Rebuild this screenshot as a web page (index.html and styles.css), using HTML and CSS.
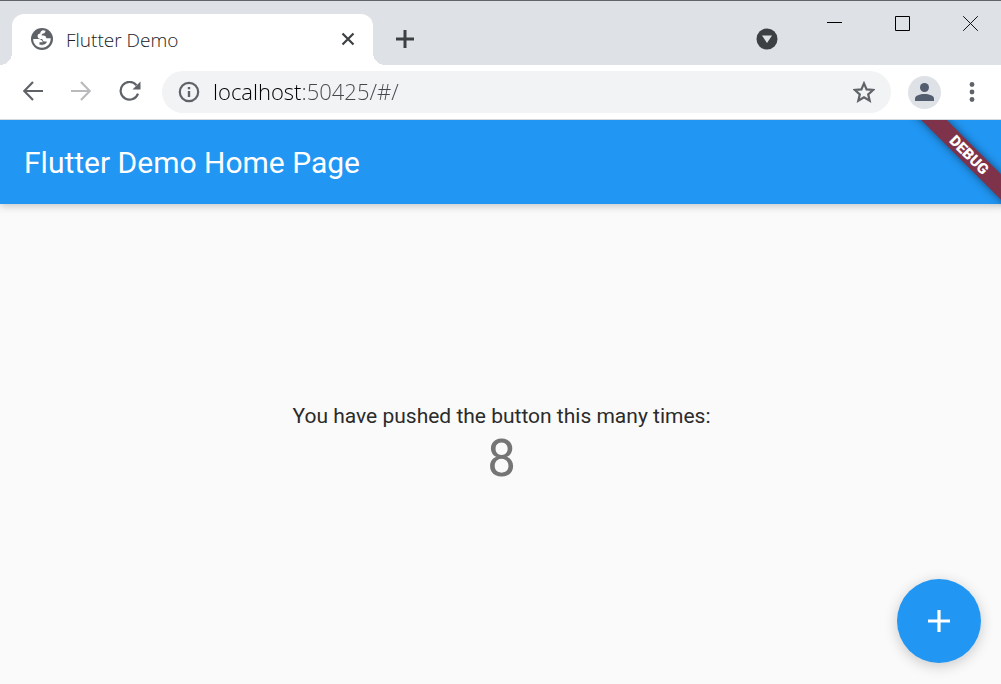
FILE: index.html
```html
<!DOCTYPE html>
<html lang="en">
<head>
<meta charset="utf-8">
<title>Flutter Demo</title>
<link rel="stylesheet" href="styles.css">
</head>
<body>
<header class="chrome">
  <div class="tabstrip">
    <div class="tab">
      <svg class="favicon" viewBox="0 0 22 22" aria-hidden="true"><circle cx="11" cy="11" r="11" fill="#5f6368"/><path d="M2.200 11h5.300c2.200 0 3.900 1.300 4.300 3.200h-3.300v2.600h2.400v2.900c-5 0-8.900-3.900-8.700-8.700zM10.900 19.700l.3-2.900c2.800-.1 4.600-1.400 4.600-3.300h-1.800c-1.800 0-2.500-1.300-2.700-2.600H9c-1.500-.1-2.400-1.100-2.400-2.600 0-1.700 1-2.500 2.700-2.700 0-1.700.8-2.900 2.500-3.300l2.700.5c-.1 1.600-1 2.500-2.300 2.800-1 .3-1.700 1-1.500 1.900h1.800c1.700 0 2.600 1 2.800 2.700h4.400c.2 5-3.600 9.500-8.800 9.500z" fill="#fff"/></svg>
      <span class="tab-title">Flutter Demo</span>
      <button class="plain" aria-label="Close tab"><svg width="14" height="14" viewBox="0 0 14 14"><path d="M1.500 1.500l11 11M12.500 1.500l-11 11" stroke="#3c4043" stroke-width="2.200"/></svg></button>
    </div>
    <button class="plain new-tab" aria-label="New tab"><svg width="18" height="18" viewBox="0 0 18 18"><path d="M9 0v18M0 9h18" stroke="#3c4043" stroke-width="3"/></svg></button>
    <button class="plain tab-search" aria-label="Search tabs"><svg width="22" height="22" viewBox="0 0 22 22"><circle cx="11" cy="11" r="10.500" fill="#3c4043"/><path d="M6 7.500h10l-5 7.500z" fill="#dee1e6"/></svg></button>
    <div class="window-buttons">
      <button class="plain" aria-label="Minimize"><svg width="15" height="15" viewBox="0 0 15 15"><path d="M0 6.500h15" stroke="#000"/></svg></button>
      <button class="plain" aria-label="Maximize"><svg width="15" height="15" viewBox="0 0 15 15"><path d="M.5.5h14v14H.5z" fill="none" stroke="#000"/></svg></button>
      <button class="plain" aria-label="Close"><svg width="15" height="15" viewBox="0 0 15 15"><path d="M.2.2l14.600 14.600M14.800.2L.2 14.800" stroke="#111"/></svg></button>
    </div>
  </div>
  <div class="toolbar">
    <div class="nav">
      <button class="plain" aria-label="Back"><svg width="20" height="20" viewBox="0 0 20 20"><path d="M20 10H1.500M10 1L1.200 10l8.800 9" fill="none" stroke="#5f6368" stroke-width="2.200"/></svg></button>
      <button class="plain" aria-label="Forward" disabled><svg width="20" height="20" viewBox="0 0 20 20"><path d="M0 10h18.500M10 1l8.800 9-8.800 9" fill="none" stroke="#bababc" stroke-width="2.200"/></svg></button>
      <button class="plain" aria-label="Reload"><svg width="22" height="20" viewBox="0 0 22 20"><path d="M19 12.600A8.900 8.900 0 1 1 17.500 4.200" fill="none" stroke="#5f6368" stroke-width="2.200"/><path d="M21.500 .5v8h-8z" fill="#5f6368"/></svg></button>
    </div>
    <div class="address">
      <svg width="22" height="22" viewBox="0 0 22 22" aria-hidden="true"><circle cx="11" cy="11" r="9.200" fill="none" stroke="#5f6368" stroke-width="2.200"/><path d="M9.800 10h2.400v6H9.800zM9.800 6h2.400v2.200H9.800z" fill="#5f6368"/></svg>
      <input class="url" type="text" aria-label="Address" value="localhost:50425/#/">
      <button class="plain" aria-label="Bookmark"><svg width="22" height="22" viewBox="0 0 22 22"><path d="M11 2.400l2.600 6 6.500.6-4.900 4.300 1.500 6.400-5.700-3.400-5.700 3.400 1.500-6.400L1.900 9l6.500-.6z" fill="none" stroke="#5f6368" stroke-width="2.200"/></svg></button>
    </div>
    <button class="plain avatar" aria-label="Profile"><svg width="19" height="18" viewBox="0 0 19 18"><circle cx="9.500" cy="4.500" r="4.500" fill="#525d70"/><path d="M0 18v-2.500c0-3 5-4.500 9.500-4.500s9.500 1.500 9.500 4.500V18z" fill="#525d70"/></svg></button>
    <button class="plain menu" aria-label="Menu"><svg width="6" height="20" viewBox="0 0 6 20"><g fill="#5f6368"><circle cx="3" cy="2.500" r="2.400"/><circle cx="3" cy="10" r="2.400"/><circle cx="3" cy="17.500" r="2.400"/></g></svg></button>
  </div>
</header>
<div class="app">
  <header class="appbar"><h1 class="appbar-title">Flutter Demo Home Page</h1></header>
  <main class="content">
    <p class="message">You have pushed the button this many times:</p>
    <output class="count">8</output>
  </main>
  <div class="banner-clip"><span class="banner">DEBUG</span></div>
  <button class="plain fab" aria-label="Increment"><svg width="22" height="22" viewBox="0 0 22 22"><path d="M11 0v22M0 11h22" stroke="#fff" stroke-width="3.200"/></svg></button>
</div>
</body>
</html>
```
FILE: styles.css
```css
* { box-sizing: border-box; }
body {
  margin: 0;
  min-height: 100vh;
  display: flex;
  flex-direction: column;
  background: #fafafa;
  font-family: "Open Sans", sans-serif;
}
svg { display: block; }
.plain {
  display: grid;
  place-items: center;
  flex: none;
  padding: 0;
  border: 0;
  background: none;
}

.tabstrip {
  height: 65px;
  padding: 0 1px 0 12px;
  display: flex;
  align-items: flex-end;
  border-top: 1px solid #63636b;
  background: #dee1e6;
}
.tab {
  position: relative;
  flex: 0 1 361px;
  height: 51px;
  padding: 0 18px 2px 19px;
  display: flex;
  align-items: center;
  gap: 13px;
  border-radius: 12px 12px 0 0;
  background: #fff;
}
.tab::before,
.tab::after {
  content: "";
  position: absolute;
  bottom: 0;
  width: 12px;
  height: 12px;
}
.tab::before {
  right: 100%;
  background: radial-gradient(circle at 0 0, #dee1e6 12px, #fff 12px);
}
.tab::after {
  left: 100%;
  background: radial-gradient(circle at 100% 0, #dee1e6 12px, #fff 12px);
}
.favicon { width: 22px; height: 22px; flex: none; }
.tab-title {
  flex: 1;
  padding-top: 2px;
  color: #202124;
  font-size: 19px;
  font-weight: 300;
}
.new-tab { height: 53px; margin-left: 23px; }
.tab-search { height: 53px; margin-left: auto; }
.window-buttons {
  align-self: flex-start;
  height: 45px;
  margin-left: 26px;
  display: flex;
  gap: 8px;
}
.window-buttons .plain { width: 60px; }

.toolbar {
  height: 55px;
  padding: 0 26px 0 23px;
  display: flex;
  align-items: center;
  border-bottom: 1px solid #d5d8dc;
  background: #fff;
}
.nav { display: flex; gap: 28px; padding-bottom: 2px; }
.address {
  flex: 1;
  height: 42px;
  margin-left: 21px;
  padding: 0 16px;
  display: flex;
  align-items: center;
  gap: 13px;
  border-radius: 21px;
  background: #f1f3f4;
}
.url {
  flex: 1;
  min-width: 0;
  height: 42px;
  padding: 0 0 2px;
  border: 0;
  outline: 0;
  color: transparent;
  background: linear-gradient(90deg, #000 90px, #44474b 90px);
  -webkit-background-clip: text;
  background-clip: text;
  font-family: "Open Sans", sans-serif;
  font-size: 22px;
  font-weight: 300;
}
.avatar {
  width: 33px;
  height: 33px;
  margin-left: 17px;
  border-radius: 50%;
  background: #dee1e6;
}
.menu { margin-left: 28px; }

.app {
  position: relative;
  flex: 1;
  display: flex;
  flex-direction: column;
  overflow: hidden;
  font-family: Roboto, sans-serif;
}
.appbar {
  height: 84px;
  padding: 0 24px;
  display: flex;
  align-items: center;
  background: #2196f3;
  box-shadow: 0 2px 8px rgba(0, 0, 0, 0.22);
}
.appbar-title {
  margin: 0;
  color: #fff;
  font-size: 30px;
  font-weight: 400;
}
.content {
  flex: 1;
  padding: 5px 0 0 2px;
  display: flex;
  flex-direction: column;
  align-items: center;
  justify-content: center;
}
.message {
  margin: 0;
  color: #2b2b2b;
  font-size: 21px;
  line-height: 24px;
}
.count {
  color: #757575;
  font-size: 51px;
  line-height: 62px;
}
.banner-clip {
  position: absolute;
  top: 0;
  right: 0;
  width: 100px;
  height: 100px;
  overflow: hidden;
}
.banner {
  position: absolute;
  top: 26px;
  left: -7px;
  width: 150px;
  height: 18px;
  transform: rotate(45deg);
  background: #7f334a;
  box-shadow: 0 0 9px rgba(0, 0, 0, 0.5);
  color: #fff;
  font-size: 15px;
  font-weight: 900;
  line-height: 18px;
  text-align: center;
}
.fab {
  position: absolute;
  right: 20px;
  bottom: 21px;
  width: 84px;
  height: 84px;
  border-radius: 50%;
  background: #2196f3;
  box-shadow: 0 3px 14px rgba(0, 0, 0, 0.2);
}
```
